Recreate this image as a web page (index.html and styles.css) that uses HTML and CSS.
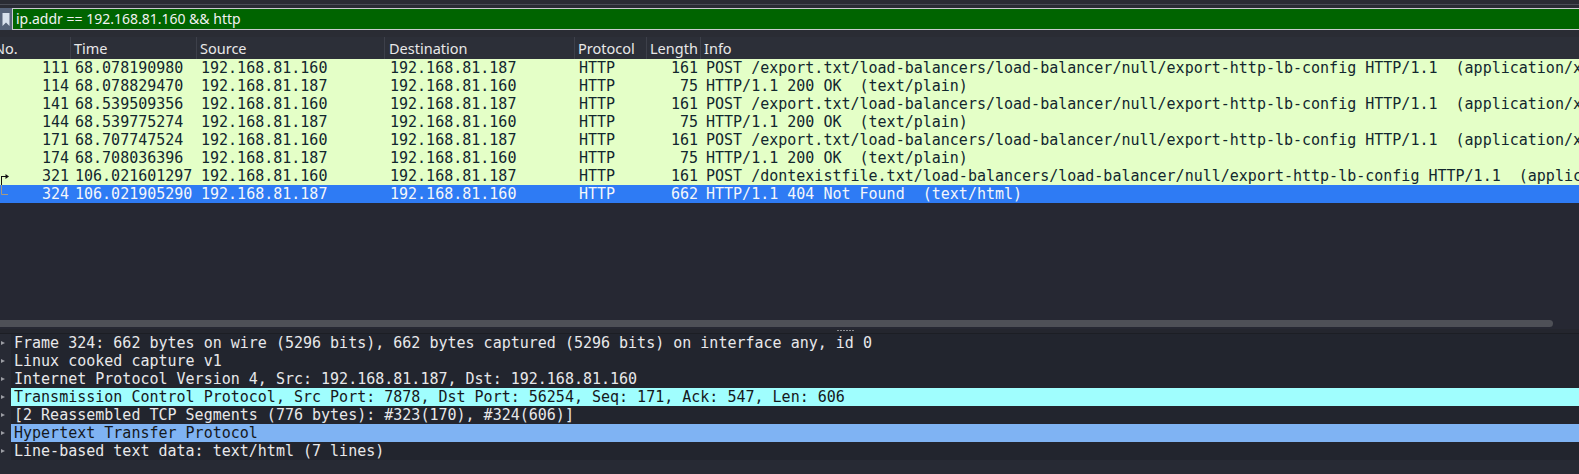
FILE: index.html
```html
<!DOCTYPE html>
<html>
<head>
<meta charset="utf-8">
<link rel="stylesheet" href="styles.css">
</head>
<body>
<div class="app">
  <div class="topstrip"><div class="topline"></div></div>
  <div class="filterrow">
    <div class="bookmark">
      <svg width="12" height="22" viewBox="0 0 12 22"><rect width="12" height="22" fill="#56637a"/><path d="M2.5 5 H9.5 V18 L6 14.5 L2.5 18 Z" fill="#d9e2ee"/></svg>
    </div>
    <div class="filterbox">ip.addr == 192.168.81.160 &amp;&amp; http</div>
  </div>
  <div class="gap"></div>
  <div class="plist">
    <div class="phead">
      <div class="hc hno">No.</div>
      <div class="hc">Time</div>
      <div class="hc">Source</div>
      <div class="hc hdst">Destination</div>
      <div class="hc">Protocol</div>
      <div class="hc">Length</div>
      <div class="hc hlast">Info</div>
    </div>
    <div class="prow"><div class="c no">111</div><div class="c tm">68.078190980</div><div class="c src">192.168.81.160</div><div class="c dst">192.168.81.187</div><div class="c pr">HTTP</div><div class="c ln">161</div><div class="c inf">POST /export.txt/load-balancers/load-balancer/null/export-http-lb-config HTTP/1.1  (application/x-www-form-urlencoded)</div></div>
    <div class="prow"><div class="c no">114</div><div class="c tm">68.078829470</div><div class="c src">192.168.81.187</div><div class="c dst">192.168.81.160</div><div class="c pr">HTTP</div><div class="c ln">75</div><div class="c inf">HTTP/1.1 200 OK  (text/plain)</div></div>
    <div class="prow"><div class="c no">141</div><div class="c tm">68.539509356</div><div class="c src">192.168.81.160</div><div class="c dst">192.168.81.187</div><div class="c pr">HTTP</div><div class="c ln">161</div><div class="c inf">POST /export.txt/load-balancers/load-balancer/null/export-http-lb-config HTTP/1.1  (application/x-www-form-urlencoded)</div></div>
    <div class="prow"><div class="c no">144</div><div class="c tm">68.539775274</div><div class="c src">192.168.81.187</div><div class="c dst">192.168.81.160</div><div class="c pr">HTTP</div><div class="c ln">75</div><div class="c inf">HTTP/1.1 200 OK  (text/plain)</div></div>
    <div class="prow"><div class="c no">171</div><div class="c tm">68.707747524</div><div class="c src">192.168.81.160</div><div class="c dst">192.168.81.187</div><div class="c pr">HTTP</div><div class="c ln">161</div><div class="c inf">POST /export.txt/load-balancers/load-balancer/null/export-http-lb-config HTTP/1.1  (application/x-www-form-urlencoded)</div></div>
    <div class="prow"><div class="c no">174</div><div class="c tm">68.708036396</div><div class="c src">192.168.81.187</div><div class="c dst">192.168.81.160</div><div class="c pr">HTTP</div><div class="c ln">75</div><div class="c inf">HTTP/1.1 200 OK  (text/plain)</div></div>
    <div class="prow"><div class="c no"><svg class="rel" width="10" height="18" viewBox="0 0 10 18"><path d="M1.5 9 V18" stroke="#111" stroke-width="1"/><path d="M1.5 9.5 H6" stroke="#111" stroke-width="1"/><path d="M5.5 7 L9 9.5 L5.5 12 Z" fill="#111"/></svg>321</div><div class="c tm">106.021601297</div><div class="c src">192.168.81.160</div><div class="c dst">192.168.81.187</div><div class="c pr">HTTP</div><div class="c ln">161</div><div class="c inf">POST /dontexistfile.txt/load-balancers/load-balancer/null/export-http-lb-config HTTP/1.1  (application/x-www-form-urlencoded)</div></div>
    <div class="prow sel"><div class="c no"><svg class="rel" width="10" height="18" viewBox="0 0 10 18"><path d="M1.5 0 V9.5 H8" stroke="#a89a80" stroke-width="1" fill="none"/></svg>324</div><div class="c tm">106.021905290</div><div class="c src">192.168.81.187</div><div class="c dst">192.168.81.160</div><div class="c pr">HTTP</div><div class="c ln">662</div><div class="c inf">HTTP/1.1 404 Not Found  (text/html)</div></div>
    <div class="pempty"></div>
  </div>
  <div class="hscroll"><div class="thumb"></div></div>
  <div class="splitter"><div class="dots"></div></div>
  <div class="details">
    <div class="drow"><span class="exp"></span><span class="dt">Frame 324: 662 bytes on wire (5296 bits), 662 bytes captured (5296 bits) on interface any, id 0</span></div>
    <div class="drow"><span class="exp"></span><span class="dt">Linux cooked capture v1</span></div>
    <div class="drow"><span class="exp"></span><span class="dt">Internet Protocol Version 4, Src: 192.168.81.187, Dst: 192.168.81.160</span></div>
    <div class="drow"><span class="exp"></span><span class="dt hl-tcp">Transmission Control Protocol, Src Port: 7878, Dst Port: 56254, Seq: 171, Ack: 547, Len: 606</span></div>
    <div class="drow"><span class="exp"></span><span class="dt">[2 Reassembled TCP Segments (776 bytes): #323(170), #324(606)]</span></div>
    <div class="drow"><span class="exp"></span><span class="dt hl-http">Hypertext Transfer Protocol</span></div>
    <div class="drow"><span class="exp"></span><span class="dt">Line-based text data: text/html (7 lines)</span></div>
  </div>
</div>
</body>
</html>
```
FILE: styles.css
```css
html, body {
  margin: 0;
  padding: 0;
  width: 1579px;
  height: 474px;
  overflow: hidden;
  background: #262833;
}
.app {
  width: 1579px;
  height: 474px;
  display: flex;
  flex-direction: column;
  font-family: "Noto Sans", "DejaVu Sans", sans-serif;
}
.topstrip {
  height: 8px;
  background: #2a2c34;
  display: flex;
  flex-direction: column;
  padding-top: 4px;
  box-sizing: border-box;
}
.topline {
  height: 1px;
  background: #4b4e57;
}
.filterrow {
  height: 22px;
  display: flex;
  background: #2a2c34;
}
.bookmark {
  width: 12px;
  height: 22px;
  flex: none;
}
.bookmark svg { display: block; }
.filterbox {
  flex: 1;
  height: 22px;
  box-sizing: border-box;
  border: 1px solid #c9cbcf;
  border-right: none;
  background: #006400;
  color: #f2f2f2;
  font-size: 14px;
  line-height: 20px;
  padding-left: 3px;
  white-space: pre;
}
.gap {
  height: 7px;
  background: #2a2c34;
}
.plist {
  display: flex;
  flex-direction: column;
  height: 281px;
  background: #262833;
  overflow: hidden;
}
.phead {
  display: grid;
  grid-template-columns: 71px 126px 188px 190px 72px 54px 1fr;
  height: 22px;
  background: #2c2f38;
  flex: none;
}
.hc {
  font-size: 14.5px;
  color: #e8e8e8;
  line-height: 22px;
  padding-left: 3px;
  border-right: 1px solid #3d404a;
  white-space: nowrap;
  overflow: hidden;
}
.hno { text-indent: -6px; padding-left: 0; }
.hdst { padding-left: 4px; }
.hlast { border-right: none; }
.prow {
  display: grid;
  grid-template-columns: 71px 126px 188px 190px 72px 54px 1fr;
  height: 18px;
  background: #e4ffc7;
  color: #12272e;
  font-family: "DejaVu Sans Mono", monospace;
  font-size: 15px;
  line-height: 18px;
  flex: none;
}
.prow.sel {
  background: #2e7bf4;
  color: #f4f6fb;
}
.c {
  white-space: pre;
  overflow: hidden;
  padding-left: 4px;
}
.no {
  text-align: right;
  padding-right: 2px;
  padding-left: 0;
  position: relative;
}
.rel {
  position: absolute;
  left: 0;
  top: 0;
}
.tm { padding-left: 4px; }
.src { padding-left: 4px; }
.dst { padding-left: 5px; }
.pr { padding-left: 4px; }
.ln { text-align: right; padding-right: 3px; padding-left: 0; }
.inf { padding-left: 5px; }
.pempty { flex: 1; }
.hscroll {
  height: 11px;
  background: #262833;
  padding-top: 2px;
  box-sizing: border-box;
}
.thumb {
  width: 1553px;
  height: 7px;
  background: #4e5057;
  border-radius: 0 4px 4px 0;
}
.splitter {
  height: 3px;
  background: #24262e;
  border-bottom: 1px solid #1c1e24;
  padding-left: 837px;
  padding-top: 1px;
  box-sizing: content-box;
}
.dots {
  width: 17px;
  height: 1px;
  background: repeating-linear-gradient(90deg, #8a8c92 0 2px, transparent 2px 3px);
}
.details {
  flex: 1;
  background: #272a34;
  font-family: "DejaVu Sans Mono", monospace;
  font-size: 15px;
  color: #e8e8ea;
}
.drow {
  display: flex;
  height: 18px;
  line-height: 18px;
}
.exp {
  width: 11px;
  flex: none;
  position: relative;
}
.exp::before {
  content: "";
  position: absolute;
  left: 1px;
  top: 7px;
  border-left: 4px solid #9b9da3;
  border-top: 2.5px solid transparent;
  border-bottom: 2.5px solid transparent;
}
.dt {
  flex: 1;
  padding-left: 3px;
  white-space: pre;
  background: #22252e;
}
.hl-tcp { background: #a0fefe; color: #15181c; }
.hl-http { background: #7fb3f3; color: #15181c; }
```
